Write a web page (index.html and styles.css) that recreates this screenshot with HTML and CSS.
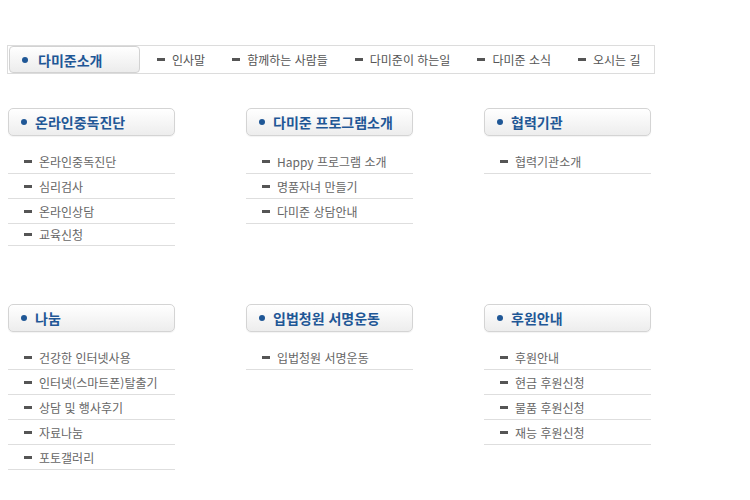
FILE: index.html
```html
<!DOCTYPE html>
<html lang="ko">
<head>
    <meta charset="UTF-8">
    <title>다미준소개</title>
    <link rel="stylesheet" href="styles.css">
</head>
<body>
    <div class="page">
        <div class="topbar">
            <div class="top-title"><span class="dot"></span>다미준소개</div>
            <ul class="top-menu">
                <li><span class="dash"></span>인사말</li>
                <li><span class="dash"></span>함께하는 사람들</li>
                <li><span class="dash"></span>다미준이 하는일</li>
                <li><span class="dash"></span>다미준 소식</li>
                <li><span class="dash"></span>오시는 길</li>
            </ul>
        </div>

        <div class="sitemap">
            <div class="section">
                <h3 class="sec-title"><span class="dot"></span>온라인중독진단</h3>
                <ul class="sec-list">
                    <li><span class="dash"></span>온라인중독진단</li>
                    <li><span class="dash"></span>심리검사</li>
                    <li><span class="dash"></span>온라인상담</li>
                    <li class="short"><span class="dash"></span>교육신청</li>
                </ul>
            </div>
            <div class="section">
                <h3 class="sec-title"><span class="dot"></span>다미준 프로그램소개</h3>
                <ul class="sec-list">
                    <li><span class="dash"></span>Happy 프로그램 소개</li>
                    <li><span class="dash"></span>명품자녀 만들기</li>
                    <li><span class="dash"></span>다미준 상담안내</li>
                </ul>
            </div>
            <div class="section">
                <h3 class="sec-title"><span class="dot"></span>협력기관</h3>
                <ul class="sec-list">
                    <li><span class="dash"></span>협력기관소개</li>
                </ul>
            </div>
            <div class="section">
                <h3 class="sec-title"><span class="dot"></span>나눔</h3>
                <ul class="sec-list">
                    <li><span class="dash"></span>건강한 인터넷사용</li>
                    <li><span class="dash"></span>인터넷(스마트폰)탈출기</li>
                    <li><span class="dash"></span>상담 및 행사후기</li>
                    <li><span class="dash"></span>자료나눔</li>
                    <li><span class="dash"></span>포토갤러리</li>
                </ul>
            </div>
            <div class="section">
                <h3 class="sec-title"><span class="dot"></span>입법청원 서명운동</h3>
                <ul class="sec-list">
                    <li><span class="dash"></span>입법청원 서명운동</li>
                </ul>
            </div>
            <div class="section">
                <h3 class="sec-title"><span class="dot"></span>후원안내</h3>
                <ul class="sec-list">
                    <li><span class="dash"></span>후원안내</li>
                    <li><span class="dash"></span>현금 후원신청</li>
                    <li><span class="dash"></span>물품 후원신청</li>
                    <li><span class="dash"></span>재능 후원신청</li>
                </ul>
            </div>
        </div>
    </div>
</body>
</html>
```

FILE: styles.css
```css
body {
    margin: 0;
    padding: 0;
    background: #fff;
    font-family: "Noto Sans CJK KR", "Noto Sans", sans-serif;
    color: #666;
}

ul {
    list-style: none;
    margin: 0;
    padding: 0;
}

.page {
    padding: 45px 0 0 7px;
}

.topbar {
    display: flex;
    align-items: center;
    width: 646px;
    height: 27px;
    border: 1px solid #dcdcdc;
}

.top-title {
    display: flex;
    align-items: center;
    width: 129px;
    height: 25px;
    margin-left: 1px;
    border: 1px solid #d2d2d2;
    border-radius: 4px;
    background: linear-gradient(#ffffff, #ececec);
    font-size: 14px;
    font-weight: bold;
    color: #1f5796;
}

.top-title .dot {
    margin: 0 10px 0 12px;
}

.top-menu {
    display: flex;
    margin-left: 17px;
    gap: 27px;
    font-size: 12px;
    color: #555;
}

.top-menu li {
    display: flex;
    align-items: center;
}

.dot {
    display: inline-block;
    width: 6px;
    height: 6px;
    border-radius: 50%;
    background: #1f5796;
}

.dash {
    display: inline-block;
    width: 8px;
    height: 3px;
    margin-right: 7px;
    background: #555;
}

.sitemap {
    display: grid;
    grid-template-columns: repeat(3, 167px);
    grid-auto-rows: 196px;
    column-gap: 71px;
    margin-top: 34px;
    padding-left: 1px;
}

.sec-title {
    display: flex;
    align-items: center;
    height: 26px;
    margin: 0;
    border: 1px solid #d4d4d4;
    border-radius: 5px;
    background: linear-gradient(#ffffff, #ededed);
    box-shadow: 0 1px 1px rgba(0, 0, 0, 0.05);
    font-size: 14px;
    font-weight: bold;
    color: #1f5796;
}

.sec-title .dot {
    margin: 0 8px 0 12px;
}

.sec-list {
    margin-top: 13px;
}

.sec-list li {
    display: flex;
    align-items: center;
    height: 24px;
    padding-left: 16px;
    border-bottom: 1px solid #dedede;
    font-size: 12px;
    color: #666;
}

.sec-list li.short {
    height: 21px;
}
```
